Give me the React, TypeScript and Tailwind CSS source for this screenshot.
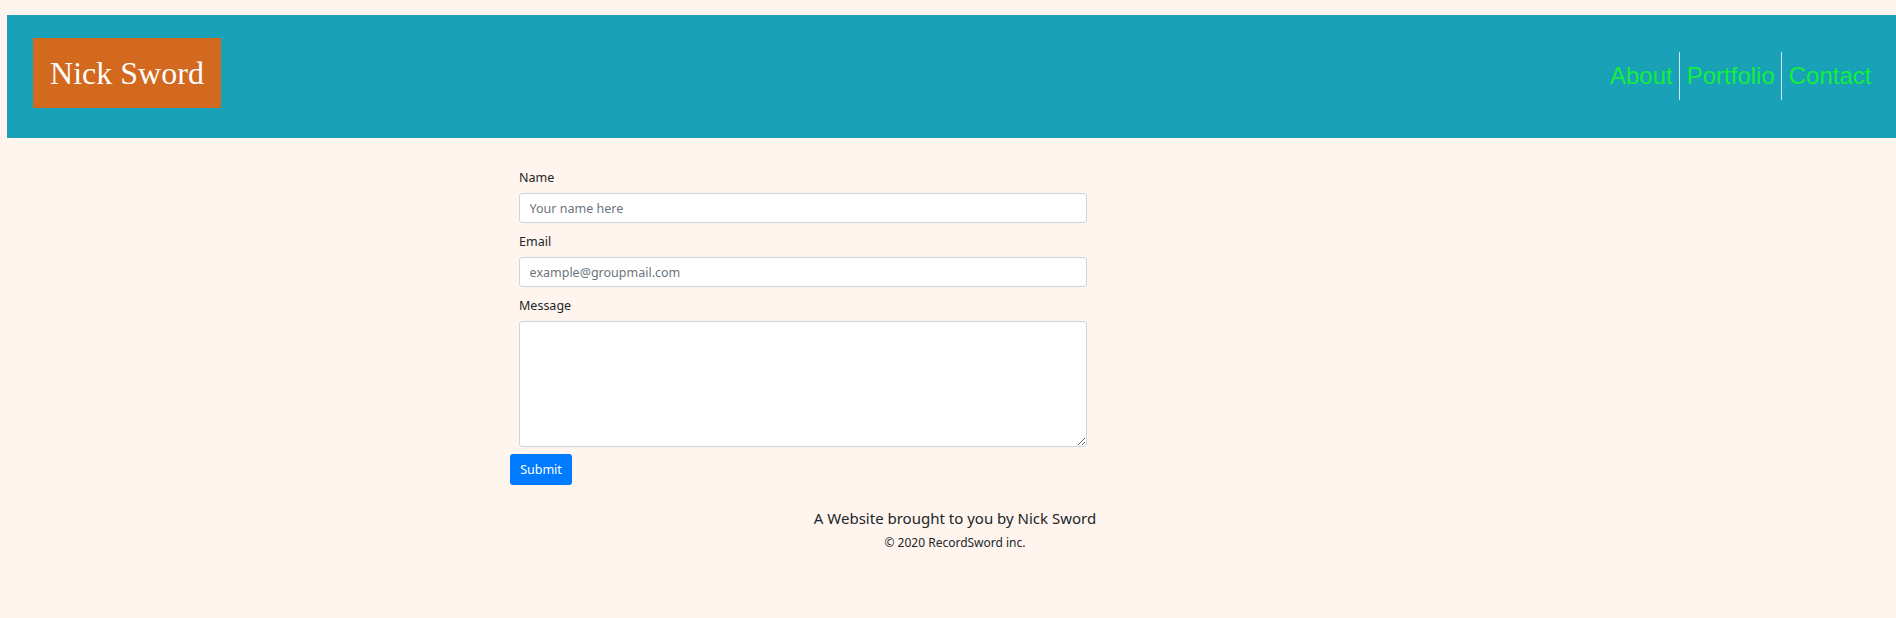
export default function App() {
  const sans = { fontFamily: '"Noto Sans", "Open Sans", sans-serif' };
  return (
    <div className="h-[618px] w-full overflow-hidden bg-[#fff5ee] pt-[15px]" style={sans}>
      <header className="ml-[7px] flex h-[123px] items-center justify-between bg-[#18a1b7]">
        <div className="mb-[8px] ml-[26px] flex h-[70px] w-[188px] items-center justify-center bg-[#d2691e]">
          <span className="text-[32px] leading-none text-white" style={{ fontFamily: '"Liberation Serif", serif' }}>
            Nick Sword
          </span>
        </div>
        <nav className="mb-[2px] mr-[18px] flex items-center" style={{ fontFamily: '"Liberation Sans", Arial, sans-serif' }}>
          <a className="block h-[48px] px-[6.5px] text-[24px] leading-[48px] text-[#14ee3c]">About</a>
          <a className="block h-[48px] border-l border-[#cfe6ea] px-[6.5px] text-[24px] leading-[48px] text-[#14ee3c]">Portfolio</a>
          <a className="block h-[48px] border-l border-[#cfe6ea] px-[6.5px] text-[24px] leading-[48px] text-[#14ee3c]">Contact</a>
        </nav>
      </header>

      <form className="ml-[510px] mt-[30px] w-[577px]">
        <div className="ml-[9px] w-[568px]">
          <label className="mb-[6px] block h-[19px] text-[12.5px] leading-[19px] text-[#212529]">Name</label>
          <input
            className="block h-[30px] w-full rounded-[3px] border border-[#ced4da] bg-white px-[9.6px] text-[12.5px] text-[#495057] placeholder:text-[#6c757d] outline-none"
            placeholder="Your name here"
          />
        </div>
        <div className="ml-[9px] mt-[9px] w-[568px]">
          <label className="mb-[6px] block h-[19px] text-[12.5px] leading-[19px] text-[#212529]">Email</label>
          <input
            className="block h-[30px] w-full rounded-[3px] border border-[#ced4da] bg-white px-[9.6px] text-[12.5px] text-[#495057] placeholder:text-[#6c757d] outline-none"
            placeholder="example@groupmail.com"
          />
        </div>
        <div className="ml-[9px] mt-[9px] w-[568px]">
          <label className="mb-[6px] block h-[19px] text-[12.5px] leading-[19px] text-[#212529]">Message</label>
          <textarea className="block h-[126px] w-full rounded-[3px] border border-[#ced4da] bg-white px-[9.6px] py-[4.8px] text-[12.5px] outline-none" />
        </div>
        <button
          type="button"
          className="mt-[7px] flex h-[31px] w-[62px] items-center justify-center rounded-[3px] bg-[#007bff] pt-[1px] text-[12.5px] text-white"
        >
          Submit
        </button>
      </form>

      <footer className="ml-[14px] mt-[22px] flex flex-col items-center text-[#212529]">
        <p className="text-[15px] leading-[22px]">A Website brought to you by Nick Sword</p>
        <p className="mt-[5px] text-[12px] leading-[18px]">© 2020 RecordSword inc.</p>
      </footer>
    </div>
  );
}
